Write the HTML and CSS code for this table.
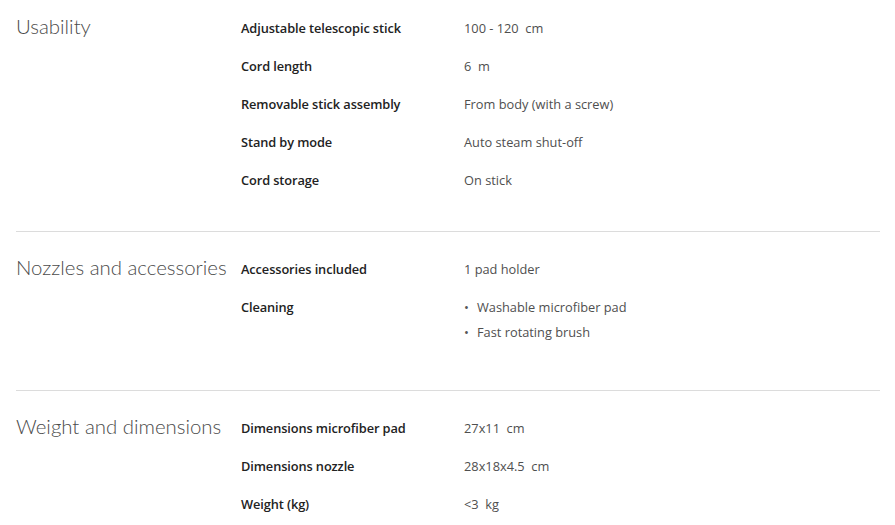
FILE: index.html
```html
<!DOCTYPE html>
<html>
<head>
<meta charset="utf-8">
<link rel="stylesheet" href="styles.css">
</head>
<body>
<div class="specs">
  <section class="group first">
    <h2 class="group-title">Usability</h2>
    <dl class="rows">
      <div class="row"><dt>Adjustable telescopic stick</dt><dd>100 - 120&nbsp; cm</dd></div>
      <div class="row"><dt>Cord length</dt><dd>6&nbsp; m</dd></div>
      <div class="row"><dt>Removable stick assembly</dt><dd>From body (with a screw)</dd></div>
      <div class="row"><dt>Stand by mode</dt><dd>Auto steam shut-off</dd></div>
      <div class="row"><dt>Cord storage</dt><dd>On stick</dd></div>
    </dl>
  </section>
  <section class="group second">
    <h2 class="group-title">Nozzles and accessories</h2>
    <dl class="rows">
      <div class="row"><dt>Accessories included</dt><dd>1 pad holder</dd></div>
      <div class="row"><dt>Cleaning</dt><dd><ul class="bullets"><li>Washable microfiber pad</li><li>Fast rotating brush</li></ul></dd></div>
    </dl>
  </section>
  <section class="group third">
    <h2 class="group-title">Weight and dimensions</h2>
    <dl class="rows">
      <div class="row"><dt>Dimensions microfiber pad</dt><dd>27x11&nbsp; cm</dd></div>
      <div class="row"><dt>Dimensions nozzle</dt><dd>28x18x4.5&nbsp; cm</dd></div>
      <div class="row"><dt>Weight (kg)</dt><dd>&lt;3&nbsp; kg</dd></div>
    </dl>
  </section>
</div>
</body>
</html>
```

FILE: styles.css
```css
html, body {
  margin: 0;
  padding: 0;
  background: #fff;
}
body {
  font-family: "Open Sans", "Liberation Sans", sans-serif;
  font-size: 12.8px;
  color: #333;
}
.specs {
  padding: 0 15px 0 16px;
}
.group {
  display: flex;
  border-top: 1px solid #dcdcdc;
  padding-top: 28px;
}
.group.first {
  border-top: none;
  padding-top: 19px;
  padding-bottom: 22px;
}
.group.second {
  padding-bottom: 29px;
}
.group-title {
  flex: 0 0 225px;
  margin: -7px 0 0 0;
  font-family: Lato, "Open Sans", sans-serif;
  font-weight: 300;
  font-size: 20.4px;
  line-height: 28px;
  color: #4b4b4b;
  white-space: nowrap;
}
.rows {
  margin: 0;
  flex: 1;
}
.row {
  display: flex;
  padding-bottom: 20px;
}
dt {
  flex: 0 0 223px;
  font-weight: 600;
  color: #222;
  line-height: 18px;
  letter-spacing: -0.1px;
}
dd {
  margin: 0;
  color: #4f4f4f;
  line-height: 18px;
}
.bullets {
  list-style: none;
  margin: 0;
  padding: 0;
}
.bullets li {
  position: relative;
  padding-left: 13px;
}
.bullets li + li {
  margin-top: 7px;
}
.bullets li::before {
  content: "\2022";
  position: absolute;
  left: 0;
  top: 0;
  font-size: 13px;
  color: #555;
}
```
